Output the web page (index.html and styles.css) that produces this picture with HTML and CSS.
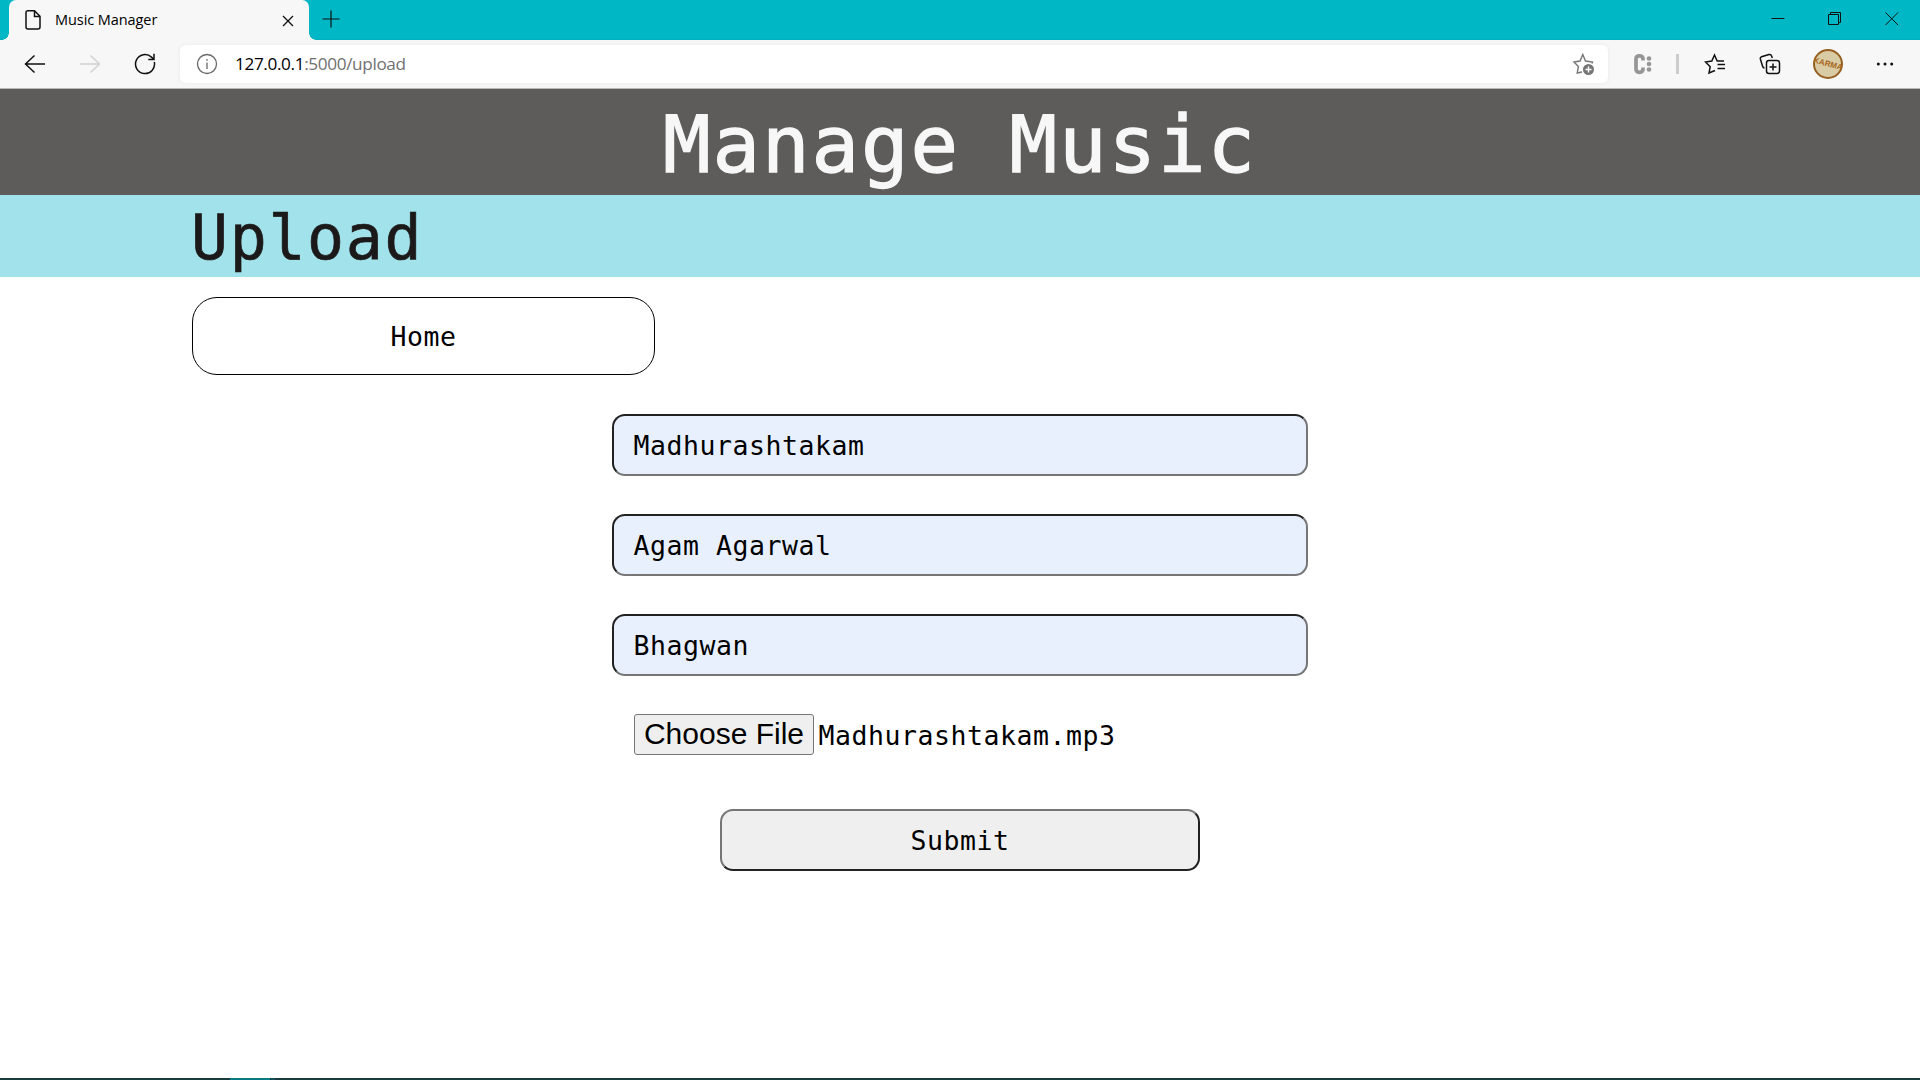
FILE: index.html
```html
<!DOCTYPE html>
<html lang="en">
<head>
<meta charset="utf-8">
<title>Music Manager</title>
<link rel="stylesheet" href="styles.css">
</head>
<body>
<div class="tabs">
  <div class="tab">
    <svg class="doc" width="18" height="22" viewBox="0 0 18 22"><path d="M3 1.8h7.5l5.5 5.500V18a2 2 0 0 1-2 2H4a2 2 0 0 1-2-2V3.300Q2 1.800 3.500 1.800M10.500 2v5.500H16"/></svg>
    <span class="tab-title">Music Manager</span>
    <svg class="tab-close" width="12" height="12" viewBox="0 0 12 12"><path d="M1 1l10 10M11 1L1 11"/></svg>
  </div>
  <svg class="plus" width="18" height="18" viewBox="0 0 18 18"><path d="M9 .5v17M.5 9h17"/></svg>
  <div class="window-controls">
    <svg width="14" height="14" viewBox="0 0 14 14"><path d="M.5 6.500h13"/></svg>
    <svg width="14" height="14" viewBox="0 0 14 14"><path d="M.5 2.500h10v10H.5zM2.500 2V.5h10v10H11"/></svg>
    <svg width="14" height="14" viewBox="0 0 14 14"><path d="M.5.5l12.500 12.500M13 .5L.5 13"/></svg>
  </div>
</div>
<div class="toolbar">
  <svg class="back" width="22" height="20" viewBox="0 0 22 20"><path d="M21 10H1.500M10.500 1.500L1.500 10l9 8.500"/></svg>
  <svg class="forward" width="22" height="20" viewBox="0 0 22 20"><path d="M1 10h19.500M11.500 1.500l9 8.500-9 8.500"/></svg>
  <svg class="reload" width="22" height="22" viewBox="0 0 22 22"><path d="M20.300 9A9.500 9.500 0 1 1 17.500 4.100L19.500 6M20 .8v5.700H14.300"/></svg>
  <div class="address">
    <svg class="info" width="22" height="22" viewBox="0 0 22 22"><circle cx="11" cy="11" r="9.500"/><path d="M11 9.500v6.500M11 6v1.800"/></svg>
    <span class="url"><span class="host">127.0.0.1</span>:5000/upload</span>
    <svg class="fav" width="24" height="24" viewBox="0 0 24 24"><path d="M10 20L5.200 21l1.200-6.500L2 10l6-1 2.800-6.500L13.500 9l7 1-.5 1.500"/><circle class="solid" cx="16.500" cy="17.500" r="5.500"/><path class="cross" d="M16.500 14.500v6M13.500 17.500h6"/></svg>
  </div>
  <svg class="ext" width="20" height="22" viewBox="0 0 20 22"><path d="M10 7.500V6Q10 2.800 6.500 2.800T3 6v10q0 3.300 3.500 3.300T10 16v-1.500"/><circle cx="16" cy="5.500" r="2.300"/><circle cx="16" cy="11" r="2.300"/><circle cx="16" cy="16.500" r="2.300"/></svg>
  <span class="divider"></span>
  <svg class="favorites" width="22" height="22" viewBox="0 0 22 22"><path d="M11 17.500L5 20l1.200-6.300L1.500 9l6.300-1L10.500 2l2.700 6H20M13.500 11.500H21M13.500 15.500H21"/></svg>
  <svg class="collections" width="22" height="22" viewBox="0 0 22 22"><rect x="7.500" y="7.500" width="13" height="13" rx="2.500"/><path d="M14 10.500v7M10.500 14h7M5.500 15Q4 15 3.500 13L1.300 5.700Q1 4.300 2.500 3.700L10 1.500q2-.5 2.500 1.300l.8 2.200"/></svg>
  <svg class="avatar" width="32" height="32" viewBox="0 0 32 32"><circle cx="16" cy="16" r="14"/><text x="16" y="18.500" transform="rotate(15 16 16)">KARMA</text></svg>
  <svg class="more" width="18" height="6" viewBox="0 0 18 6"><circle cx="2.300" cy="3" r="1.500"/><circle cx="9" cy="3" r="1.500"/><circle cx="15.700" cy="3" r="1.500"/></svg>
</div>
<main class="page">
  <h1 class="banner">Manage Music</h1>
  <h2 class="section">Upload</h2>
  <a class="home">Home</a>
  <form class="form">
    <div class="field" role="textbox">Madhurashtakam</div>
    <div class="field" role="textbox">Agam Agarwal</div>
    <div class="field" role="textbox">Bhagwan</div>
    <div class="file"><button class="choose" type="button">Choose File</button><span class="filename">Madhurashtakam.mp3</span></div>
    <button class="submit" type="button">Submit</button>
  </form>
</main>
<footer class="taskbar"><span class="active"></span><span class="edge"></span></footer>
</body>
</html>
```
FILE: styles.css
```css
* { box-sizing: border-box; }
body { margin: 0; width: 1920px; height: 1080px; overflow: hidden; display: flex; flex-direction: column; background: #fff; font-family: "Open Sans", sans-serif; color: #000; }
svg { display: block; flex: none; fill: none; stroke: #111; stroke-width: 1.5; }

.tabs { height: 40px; flex: none; display: flex; align-items: flex-start; background: linear-gradient(#00b7c6 38px, #00aebd); padding-left: 9px; }
.tab { position: relative; width: 300px; height: 40px; background: #f7f7f7; border-radius: 7px 7px 0 0; display: flex; padding-left: 15px; }
.tab::before, .tab::after { content: ""; position: absolute; bottom: 0; width: 7px; height: 7px; }
.tab::before { left: -7px; background: radial-gradient(circle at 0 0, transparent 6.500px, #f7f7f7 7px); }
.tab::after { right: -7px; background: radial-gradient(circle at 100% 0, transparent 6.500px, #f7f7f7 7px); }
.doc { margin-top: 9px; }
.tab-title { margin-left: 13px; width: 214px; font-size: 14.500px; line-height: 39px; letter-spacing: -0.070px; white-space: nowrap; }
.tab-close { margin: 15px 0 0 13px; stroke-width: 1.300; }
.plus { margin: 10px 0 0 12.500px; stroke-width: 1.200; }
.window-controls { margin-left: auto; display: flex; gap: 43px; padding: 12px 21.500px 0 0; }
.window-controls svg { stroke-width: 1; }

.toolbar { height: 49px; flex: none; display: flex; align-items: center; background: #f7f7f7; border-bottom: 1px solid #b9b9b9; padding-left: 24px; }
.forward { margin-left: 33px; stroke: #d2d2d2; }
.reload { margin-left: 33px; }
.address { margin-left: 24px; width: 1428px; height: 38px; background: #fff; border-radius: 6px; box-shadow: 0 0 4px #e9e9e9; display: flex; align-items: center; padding: 0 12px 0 16px; }
.info { stroke: #686868; stroke-width: 1.300; }
.url { margin: -2px 0 0 17px; font-size: 17.200px; letter-spacing: -0.370px; color: #717171; }
.host { color: #000; }
.fav { margin-left: auto; stroke: #767676; stroke-width: 1.400; }
.fav .solid { fill: #767676; stroke: none; }
.fav .cross { stroke: #fff; }
.ext { margin-left: 25px; stroke: #969696; stroke-width: 3.700; }
.ext circle { fill: #969696; stroke: none; }
.divider { margin-left: 23px; width: 3px; height: 20px; background: #cdcdcd; }
.favorites { margin-left: 25px; }
.collections { margin-left: 33px; }
.avatar { margin-left: 31px; overflow: visible; }
.avatar circle { fill: #d9cba4; stroke: #956020; stroke-width: 2; }
.avatar text { font: bold 8px "Liberation Sans", sans-serif; text-anchor: middle; fill: #a8661c; stroke: none; }
.more { margin-left: 32px; }
.more circle { fill: #111; stroke: none; }

.page { flex: 1; display: flex; flex-direction: column; font-family: "DejaVu Sans Mono", monospace; }
.banner { margin: 0; height: 106px; line-height: 112px; background: #5d5c5a; color: #f7f7f7; text-align: center; font-size: 79px; font-weight: 400; letter-spacing: 1.940px; -webkit-text-stroke: 1.300px #f7f7f7; }
.section { margin: 0; height: 82px; line-height: 86px; padding-left: 191px; background: #a2e2ea; color: #1b1919; font-size: 61.500px; font-weight: 400; letter-spacing: 1.680px; -webkit-text-stroke: 0.700px #1b1919; }
.home, .field, .filename, .submit { font-family: "DejaVu Sans Mono", monospace; font-size: 26.500px; letter-spacing: 0.550px; }
.home { width: 463px; height: 78px; margin: 20px 0 0 192px; border: 1px solid #000; border-radius: 25px; text-align: center; line-height: 78px; }
.form { width: 696px; margin: 39px auto 0; display: flex; flex-direction: column; }
.field { height: 62px; margin-bottom: 38px; border: 2px solid; border-color: #212121 #767676 #767676 #212121; border-radius: 13px; background: #e8f0fe; padding-left: 19.500px; line-height: 60px; }
.file { display: flex; height: 41px; padding-left: 22px; }
.choose { width: 180px; height: 41px; border: 1px solid #767676; border-radius: 3px; background: #efefef; padding: 0 0 2px; font: 30px/36px "Liberation Sans", sans-serif; color: #000; }
.filename { margin-left: 4.500px; line-height: 44px; }
.submit { width: 480px; height: 62px; margin: 54px auto 0; border: 2px solid; border-color: #767676 #212121 #212121 #767676; border-radius: 13px; background: #efefef; padding: 1px 0 0; color: #000; }

.taskbar { height: 2px; flex: none; display: flex; gap: 1px; padding-left: 230px; background: #183b3e; }
.active { width: 40px; background: #087b83; }
.edge { width: 4px; background: #10545a; }
```
